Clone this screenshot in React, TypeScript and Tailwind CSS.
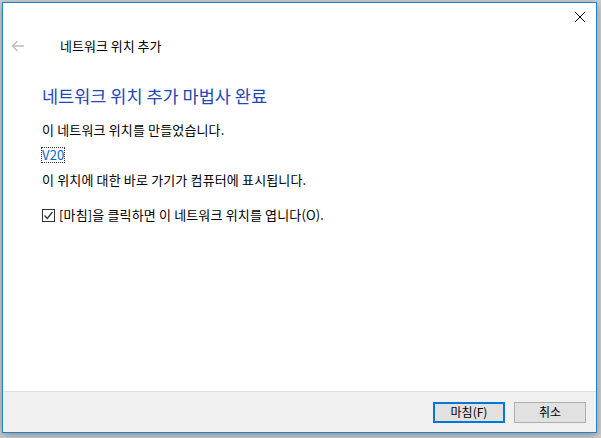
import { useState } from 'react';

const font = { fontFamily: '"Noto Sans CJK KR", "Noto Sans", sans-serif' };

function BackArrow() {
    return (
        <svg width="14" height="12" viewBox="0 0 14 12" className="text-[#bdbdbd]">
            <path d="M13 6H1.5M6.5 1L1.5 6l5 5" fill="none" stroke="currentColor" strokeWidth="1.3" />
        </svg>
    );
}

function CloseIcon() {
    return (
        <svg width="12" height="12" viewBox="0 0 12 12" className="text-black">
            <path d="M1 1l10 10M11 1L1 11" fill="none" stroke="currentColor" strokeWidth="1" />
        </svg>
    );
}

function CheckBox({ checked, onToggle }: { checked: boolean; onToggle: () => void }) {
    return (
        <span
            onClick={onToggle}
            className="w-[13px] h-[13px] border border-[#333333] bg-white flex items-center justify-center shrink-0"
        >
            {checked && (
                <svg width="11" height="11" viewBox="0 0 11 11">
                    <path d="M1.5 5.5l2.8 3L9.5 2" fill="none" stroke="#333333" strokeWidth="1.3" />
                </svg>
            )}
        </span>
    );
}

export default function App() {
    const [openAfter, setOpenAfter] = useState(true);

    return (
        <div className="w-[601px] h-[438px] bg-[#cfcfcf] overflow-hidden pl-[2px] pt-[2px]" style={font}>
            <div className="w-[595px] h-[431px] border border-[#1883d7] bg-white flex flex-col shadow-[0_2px_8px_rgba(0,0,0,0.35)]">
                {/* Caption */}
                <div className="h-[28px] flex justify-end items-center pr-[8px] shrink-0">
                    <div className="w-[16px] h-[16px] flex items-center justify-center">
                        <CloseIcon />
                    </div>
                </div>

                {/* Nav */}
                <div className="h-[30px] flex items-center shrink-0">
                    <span className="w-[57px] pl-[8px] flex items-center">
                        <BackArrow />
                    </span>
                    <span className="text-[13px] text-black">네트워크 위치 추가</span>
                </div>

                {/* Content */}
                <div className="flex-1 pl-[39px] pt-[24px] text-[13px] text-black tracking-[0.15px]">
                    <div className="text-[17.5px] leading-[22px] text-[#1d48b6] tracking-normal">네트워크 위치 추가 마법사 완료</div>
                    <div className="mt-[15px] leading-[16px]">이 네트워크 위치를 만들었습니다.</div>
                    <div className="mt-[10px] leading-[16px] flex">
                        <span className="outline outline-1 outline-dotted outline-[#333333] text-[#0066cc] leading-[14px]">V20</span>
                    </div>
                    <div className="mt-[10px] leading-[16px]">이 위치에 대한 바로 가기가 컴퓨터에 표시됩니다.</div>
                    <div className="mt-[19px] flex items-center gap-[4px] leading-[16px]">
                        <CheckBox checked={openAfter} onToggle={() => setOpenAfter(!openAfter)} />
                        <span>[마침]을 클릭하면 이 네트워크 위치를 엽니다(O).</span>
                    </div>
                </div>

                {/* Footer */}
                <div className="h-[41px] border-t border-[#dfdfdf] bg-[#f0f0f0] flex items-center justify-end gap-[9px] pr-[10px] shrink-0">
                    <button className="w-[72px] h-[21px] border-2 border-[#0078d7] bg-[#e1e1e1] text-[12px] text-black flex items-center justify-center leading-none">
                        마침(F)
                    </button>
                    <button className="w-[72px] h-[21px] border border-[#adadad] bg-[#e1e1e1] text-[12px] text-black flex items-center justify-center leading-none">
                        취소
                    </button>
                </div>
            </div>
        </div>
    );
}
